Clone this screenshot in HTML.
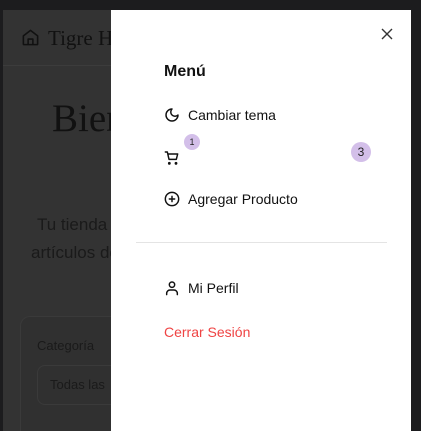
<!DOCTYPE html>
<html><head><meta charset="utf-8"><style>
*{margin:0;padding:0;box-sizing:border-box}
html,body{width:421px;height:431px;overflow:hidden}
body{background:#1c1c1e;position:relative;font-family:"Liberation Sans",sans-serif}
.page{position:absolute;left:3px;top:10px;width:408px;height:421px;background:#333333;overflow:hidden}
.hdr{position:absolute;left:0;top:0;width:100%;height:56px;border-bottom:1px solid #3c3c3c}
.ser{font-family:"Liberation Serif",serif;color:#111;position:absolute;white-space:nowrap}
.g{position:absolute;color:#1a1a1a;white-space:nowrap}
.card{position:absolute;left:17px;top:306px;width:200px;height:115px;border:1px solid #3a3a3a;border-bottom:none;border-radius:10px 10px 0 0;background:#303030}
.sel{position:absolute;left:34px;top:355px;width:200px;height:40px;border:1px solid #3a3a3a;border-radius:8px}
.drawer{position:absolute;left:111px;top:10px;width:300px;height:421px;background:#fff}
.t{position:absolute;font-size:14px;color:#111;white-space:nowrap;line-height:16px}
.ic{position:absolute}
.b{position:absolute;border-radius:50%;background:#d3bfe9;color:#222;text-align:center}
</style></head><body>
<div class="page">
 <div class="hdr">
  <svg class="ic" style="left:18px;top:18px" width="19" height="19" viewBox="0 0 24 24" fill="none" stroke="#111" stroke-width="2" stroke-linejoin="round"><path d="M3 10l9-7 9 7v10a1 1 0 0 1-1 1H4a1 1 0 0 1-1-1z"/><path d="M9 21v-7h6v7"/></svg>
  <div class="ser" style="left:45px;top:16px;font-size:21px">Tigre Home</div>
 </div>
 <div class="ser" style="left:49px;top:86px;font-size:39px">Bienvenido</div>
 <div class="g" style="left:34px;top:205px;font-size:17px">Tu tienda de</div>
 <div class="g" style="left:28px;top:233px;font-size:17px">artículos de</div>
 <div class="card"></div>
 <div class="g" style="left:34px;top:328px;font-size:13px">Categoría</div>
 <div class="sel"></div>
 <div class="g" style="left:47px;top:367px;font-size:13px">Todas las</div>
</div>
<div class="drawer"></div>
<svg class="ic" style="left:381px;top:28px" width="12" height="12" viewBox="0 0 12 12" stroke="#333" stroke-width="1.4"><path d="M1 1l10 10M11 1L1 11"/></svg>
<div class="t" style="left:164px;top:64px;font-size:16px;font-weight:bold">Menú</div>
<svg class="ic" style="left:164px;top:107px" width="16" height="16" viewBox="0 0 24 24" fill="none" stroke="#111" stroke-width="2.2" stroke-linecap="round" stroke-linejoin="round"><path d="M12 3a6 6 0 0 0 9 9 9 9 0 1 1-9-9z"/></svg>
<div class="t" style="left:188px;top:107px">Cambiar tema</div>
<svg class="ic" style="left:164px;top:150px" width="16" height="16" viewBox="0 0 24 24" fill="none" stroke="#111" stroke-width="2.2" stroke-linecap="round" stroke-linejoin="round"><path d="M2 3h3l2.5 11h11l2-8H6"/><circle cx="8" cy="20" r="1" fill="#111"/><circle cx="18" cy="20" r="1" fill="#111"/></svg>
<div class="b" style="left:184px;top:134px;width:16px;height:16px;font-size:9px;line-height:17px">1</div>
<div class="b" style="left:351px;top:142px;width:20px;height:20px;font-size:12px;line-height:20px">3</div>
<svg class="ic" style="left:164px;top:191px" width="16" height="16" viewBox="0 0 24 24" fill="none" stroke="#111" stroke-width="2.2" stroke-linecap="round"><circle cx="12" cy="12" r="10"/><path d="M8 12h8M12 8v8"/></svg>
<div class="t" style="left:188px;top:191px">Agregar Producto</div>
<div style="position:absolute;left:136px;top:242px;width:251px;height:1px;background:#e4e4e4"></div>
<svg class="ic" style="left:164px;top:280px" width="16" height="16" viewBox="0 0 24 24" fill="none" stroke="#111" stroke-width="2.2" stroke-linecap="round"><circle cx="12" cy="7" r="4"/><path d="M4 22v-2a5 5 0 0 1 5-5h6a5 5 0 0 1 5 5v2"/></svg>
<div class="t" style="left:188px;top:280px">Mi Perfil</div>
<div class="t" style="left:164px;top:324px;color:#ef4444">Cerrar Sesión</div>
</body></html>
